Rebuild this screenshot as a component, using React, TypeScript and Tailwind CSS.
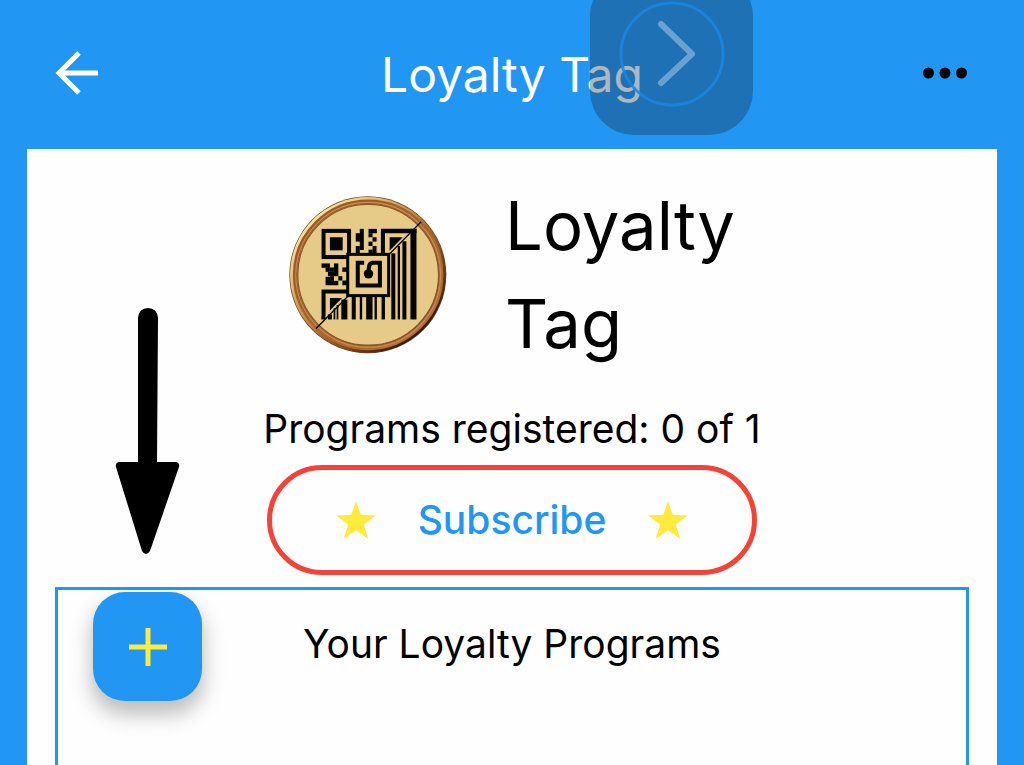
const TOP_MODULES = [
  [119, 27, 12, 63],
  [107, 40, 13, 25],
  [107, 78, 12, 22],
  [145, 27, 25, 13],
  [145, 40, 12, 12],
  [157, 52, 12, 13],
  [145, 65, 12, 13],
  [157, 78, 12, 12],
  [145, 89, 12, 12],
  [157, 90, 12, 12],
];

const LEFT_MODULES = [
  [5, 130, 25, 13],
  [17, 142, 13, 13],
  [42, 130, 13, 26],
  [30, 142, 12, 13],
  [24, 155, 31, 13],
  [30, 168, 12, 14],
  [17, 182, 38, 13],
  [17, 170, 13, 13],
  [67, 142, 14, 13],
  [55, 168, 12, 13],
  [67, 181, 14, 14],
];

const BARS = [
  [95, 228, 12, 69],
  [119, 228, 7, 69],
  [138, 228, 19, 69],
  [163, 228, 7, 69],
  [184, 228, 10, 69],
  [213, 100, 12, 197],
  [232, 78, 7, 219],
  [246, 64, 12, 233],
  [270, 27, 18, 270],
  [64, 238, 18, 59],
  [50, 254, 5, 43],
  [41, 264, 5, 33],
  [24, 282, 12, 15],
];

function Modules({ cells }: { cells: number[][] }) {
  return (
    <>
      {cells.map(([x, y, w, h]) => (
        <rect key={`${x}-${y}`} x={x} y={y} width={w} height={h} />
      ))}
    </>
  );
}

function CoinLogo() {
  return (
    <svg viewBox="27 33 471 471" className="size-[158px] shrink-0" role="img" aria-label="Loyalty Tag coin">
      <defs>
        <linearGradient id="rim" x1="0" y1="0" x2="1" y2="1">
          <stop offset="0.1" stopColor="#fdf3b8" />
          <stop offset="0.3" stopColor="#dcb873" />
          <stop offset="0.55" stopColor="#a9682c" />
          <stop offset="0.85" stopColor="#3a1504" />
        </linearGradient>
        <linearGradient id="rim-inner" x1="0" y1="0" x2="1" y2="1">
          <stop offset="0" stopColor="#96541f" />
          <stop offset="0.5" stopColor="#a9642c" />
          <stop offset="1" stopColor="#b87038" />
        </linearGradient>
      </defs>
      <circle cx="262" cy="268" r="234" fill="#6b4420" />
      <circle cx="262" cy="268" r="232" fill="url(#rim)" />
      <circle cx="263" cy="268" r="218" fill="none" stroke="url(#rim-inner)" strokeWidth="13" />
      <circle cx="263" cy="268" r="216" fill="none" stroke="#c98f55" strokeWidth="3" />
      <circle cx="263" cy="268" r="210" fill="#e5cb87" stroke="#8d5729" strokeWidth="4" />
      <g transform="translate(119 104)" fill="#050402">
        <rect x="11" y="33" width="76" height="78" fill="none" stroke="#050402" strokeWidth="12" />
        <rect x="30" y="52" width="38" height="39" />
        <Modules cells={TOP_MODULES} />
        <Modules cells={LEFT_MODULES} />
        <path d="M182 27H288V40H194V103H182Z" />
        <path d="M208 52H247L208 92Z" />
        <path d="M5 208H82V220H17V286L5 297Z" />
        <path d="M30 233H66L30 270Z" />
        <Modules cells={BARS} />
        <path d="M5 297V288H17V297Z" />
        <path d="M-12 325L302 6" stroke="#050402" strokeWidth="4" />
        <rect x="83" y="103" width="122" height="123" fill="#e5cb87" stroke="#050402" strokeWidth="9" />
        <path
          d="M132 128H113V196H179V128H157Q146 130 146 144V158"
          fill="none"
          stroke="#050402"
          strokeWidth="12"
        />
        <circle cx="145" cy="161" r="14" />
      </g>
    </svg>
  );
}

function Star() {
  return (
    <svg viewBox="0 0 40 38" className="h-[38px] w-10" fill="#ffeb3b" aria-hidden="true">
      <path d="M20 0L24.7 13.8L40 14.4L27.7 23.4L32.4 38L20 29.3L7.6 38L12.3 23.4L0 14.4L15.3 13.8Z" />
    </svg>
  );
}

// floating assistive button that hangs off the top of the screen
function AssistiveButton() {
  return (
    <button
      aria-label="Open shortcuts"
      className="absolute -top-7 left-[590px] size-[163px] rounded-[44px] bg-[#1b2f3f]/35"
    >
      <svg viewBox="0 0 163 163" fill="none">
        <circle cx="82" cy="82" r="51" stroke="#1c86e0" strokeWidth="3" strokeOpacity="0.85" />
        <path
          d="M71 52L102 82L71 111"
          stroke="#a9c8e6"
          strokeOpacity="0.55"
          strokeWidth="6"
          strokeLinecap="round"
          strokeLinejoin="round"
        />
      </svg>
    </button>
  );
}

function PointerArrow() {
  return (
    <svg
      viewBox="0 0 65 248"
      className="pointer-events-none absolute top-[308px] left-[115px] h-[248px] w-[65px]"
      aria-hidden="true"
    >
      <path d="M23 154L23 10Q24 0 33 0Q42 0 43 10L42 154H61Q65 155 64 159L35 243Q31 249 27 243L1 159Q0 155 4 154Z" />
    </svg>
  );
}

export default function App() {
  return (
    <div className="relative flex min-h-screen flex-col overflow-hidden bg-[#2196f3] px-[27px] font-['Inter','Liberation_Sans',sans-serif] text-black">
      <header className="grid h-[149px] grid-cols-[1fr_auto_1fr] items-center px-7 pb-1">
        <button aria-label="Back" className="justify-self-start">
          <svg viewBox="0 0 44 44" className="size-11" fill="none" stroke="white" strokeWidth="5">
            <path d="M43 22H4M24 2L4 22L24 42" />
          </svg>
        </button>
        <h1 className="pt-1 text-5xl leading-[60px] text-white">Loyalty Tag</h1>
        <button aria-label="More options" className="justify-self-end">
          <svg viewBox="0 0 46 12" className="h-3 w-[46px]">
            <circle cx="5.5" cy="6" r="5.5" />
            <circle cx="22" cy="6" r="5.5" />
            <circle cx="38.5" cy="6" r="5.5" />
          </svg>
        </button>
      </header>

      <main className="flex flex-1 flex-col items-center bg-[#fefefe] px-7 pt-7">
        <div className="flex items-center gap-[58px]">
          <CoinLogo />
          <h2 className="w-[230px] text-[67px] leading-[98px]">Loyalty Tag</h2>
        </div>

        <p className="mt-7 text-[39px] leading-[56px]">Programs registered: 0 of 1</p>

        <button className="mt-2 flex h-[110px] items-center gap-[42px] rounded-full border-[5px] border-[#f44336] px-16 text-[39px] font-medium text-[#2196f3]">
          <Star />
          Subscribe
          <Star />
        </button>

        <section className="mt-3 grid w-full flex-1 grid-cols-[1fr_auto_1fr] items-start border-x-3 border-t-3 border-[#2196f3] pt-0.5">
          <button
            aria-label="Add program"
            className="ml-[35px] flex size-[109px] items-center justify-center rounded-[32px] bg-[#2196f3] shadow-[0_12px_20px_2px_rgba(0,0,0,0.25)]"
          >
            <svg viewBox="0 0 38 38" className="size-[38px]" stroke="#ffeb3b" strokeWidth="5">
              <path d="M19 0V38M0 19H38" />
            </svg>
          </button>
          <h3 className="mt-6 text-[39px] leading-[56px]">Your Loyalty Programs</h3>
        </section>
      </main>

      <PointerArrow />
      <AssistiveButton />
    </div>
  );
}
